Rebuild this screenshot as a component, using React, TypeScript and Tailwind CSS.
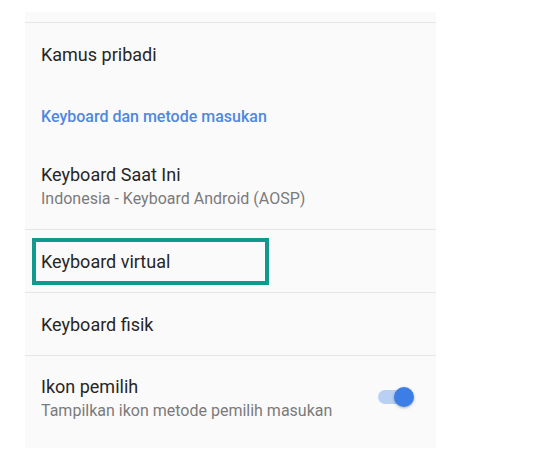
const font = { fontFamily: "Roboto, 'Noto Sans', sans-serif" };

const Divider = () => <div className="h-px bg-[#e6e6e6]" />;

const App = () => {
  return (
    <div className="w-[536px] h-[469px] bg-white pt-[12px] pl-[25px]" style={font}>
      <div className="relative w-[411px] h-[436px] bg-[#fafafa]">
        <div className="h-[10px]" />
        <Divider />

        <div className="h-[64px] flex items-center pl-[16px] pb-[2px]">
          <p className="text-[18px] text-[#262626]">Kamus pribadi</p>
        </div>

        <div className="h-[60px] flex items-center pl-[16px]">
          <p className="text-[16px] font-medium text-[#5088dc]">Keyboard dan metode masukan</p>
        </div>

        <div className="h-[82px] flex flex-col justify-center pl-[16px] pb-[2px]">
          <p className="text-[18px] leading-[24px] text-[#262626]">Keyboard Saat Ini</p>
          <p className="text-[16px] leading-[24px] text-[#7a7a7a]">Indonesia - Keyboard Android (AOSP)</p>
        </div>
        <Divider />

        <div className="h-[62px] flex items-center pl-[16px]">
          <p className="text-[18px] text-[#262626]">Keyboard virtual</p>
        </div>
        <Divider />

        <div className="h-[62px] flex items-center pl-[16px]">
          <p className="text-[18px] text-[#262626]">Keyboard fisik</p>
        </div>
        <Divider />

        <div className="h-[86px] flex items-center justify-between pl-[16px] pr-[22px]">
          <div className="flex flex-col">
            <p className="text-[18px] leading-[24px] text-[#262626]">Ikon pemilih</p>
            <p className="text-[16px] leading-[24px] text-[#7a7a7a]">Tampilkan ikon metode pemilih masukan</p>
          </div>
          <div className="relative w-[36px] h-[20px] mb-[4px] flex items-center">
            <div className="w-[34px] h-[14px] rounded-full bg-[#b9d0f5]" />
            <div className="absolute right-0 top-0 w-[20px] h-[20px] rounded-full bg-[#3d7de6] shadow-[0_1px_3px_rgba(0,0,0,0.3)]" />
          </div>
        </div>

        <div className="absolute left-[7px] top-[226px] w-[237px] h-[47px] border-[4px] border-[#0e9a8c]" />
      </div>
    </div>
  );
};

export default App;
